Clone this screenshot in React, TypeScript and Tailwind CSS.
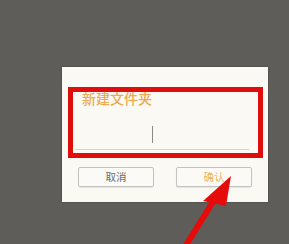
export default function App() {
  return (
    <div
      className="relative w-[289px] h-[244px] overflow-hidden bg-[#5f5d5a] pt-[67px] pl-[62px]"
      style={{ fontFamily: '"Noto Sans CJK SC", "Noto Sans", sans-serif' }}
    >
      {/* dialog */}
      <div className="w-[206px] h-[135px] bg-[#fbf9f4] pt-[20px] pl-[6px] pr-[5px] shadow-[0_0_2px_rgba(0,0,0,0.3)]">
        {/* red highlight box */}
        <div className="h-[71px] border-[5px] border-[#e00d0d] flex flex-col">
          <div className="pl-[9px] -mt-[3px] text-[14px] leading-[18px] font-medium text-[#eaab52]">
            新建文件夹
          </div>
          <div className="flex-1 relative ml-[2px] mr-[9px] border-b border-[#e8d5b0]">
            <div className="absolute left-[77px] top-[19px] w-[1px] h-[17px] bg-[#8a8a8a]" />
          </div>
          <div className="h-[3px]" />
        </div>

        {/* buttons */}
        <div className="mt-[9px] pl-[10px] flex gap-[22px]">
          <button className="w-[76px] h-[20px] border border-[#c4c2bd] rounded-[2px] bg-[#fbfaf6] text-[10.5px] leading-none text-[#6b6a68] shadow-[0_1px_1px_rgba(0,0,0,0.08)]">
            取消
          </button>
          <button className="w-[76px] h-[20px] border border-[#c4c2bd] rounded-[2px] bg-[#fbfaf6] text-[10.5px] leading-none text-[#ecb462] shadow-[0_1px_1px_rgba(0,0,0,0.08)]">
            确认
          </button>
        </div>
      </div>

      {/* red arrow annotation */}
      <svg className="absolute left-0 top-0" width="289" height="244" viewBox="0 0 289 244">
        <line x1="183" y1="250" x2="216" y2="197" stroke="#e50b0b" strokeWidth="6" />
        <polygon points="231,176 203,201 226,206" fill="#e50b0b" />
      </svg>
    </div>
  );
}
